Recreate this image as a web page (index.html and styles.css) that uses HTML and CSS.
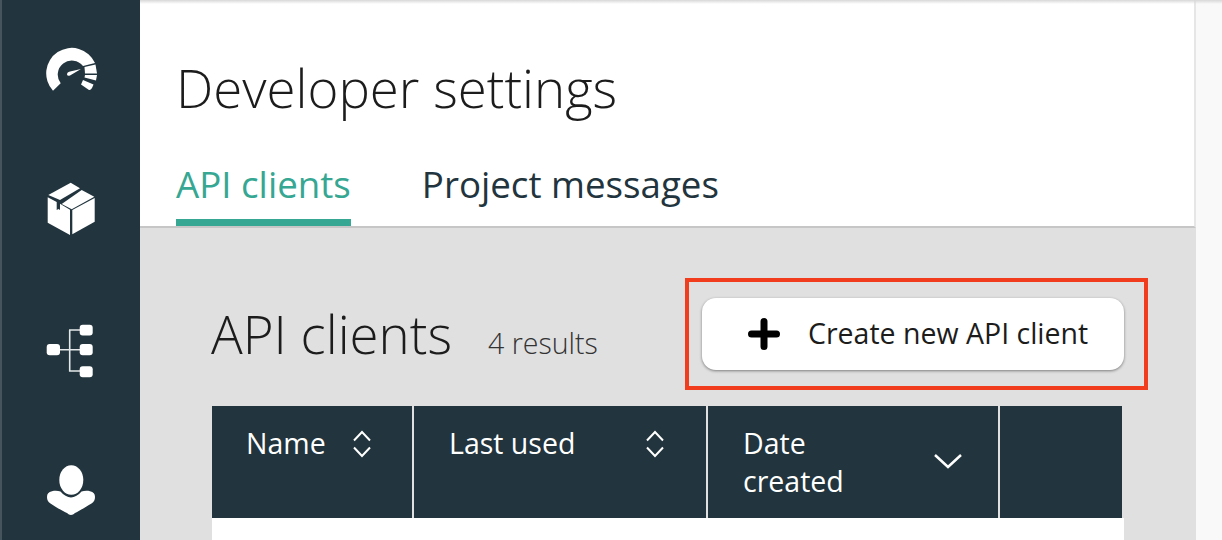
FILE: index.html
```html
<!DOCTYPE html>
<html lang="en">
<head>
<meta charset="utf-8">
<title>Developer settings</title>
<link rel="stylesheet" href="styles.css">
</head>
<body>
<div class="app">
  <nav class="sidebar">
    <svg class="nav-icon" width="62" height="58" viewBox="0 0 62 58">
      <g fill="#fff">
        <path d="M13 48.700A25.500 25.500 0 1 1 55 21L43 24A14 14 0 1 0 20.700 41.300Z"/>
        <path d="M41 27L30 33.500Q27.500 34.500 27 32.500Q27 30 30 29.500Z"/>
        <path d="M44.500 25L55.500 22.500L57 31.500H45Z"/>
        <path d="M45 33H57L56 38.500L44.500 35.500Z"/>
        <path d="M43 38L53.500 42.500L52 46Q50.500 48.500 49 48L41 42.500Z"/>
      </g>
    </svg>
    <svg class="nav-icon" width="62" height="62" viewBox="0 0 62 62">
      <g fill="#fff">
        <path d="M30.700 4.700L40 10.300L20 22L8.300 17Z"/>
        <path d="M41.700 12L54.300 18.700L31.700 31.300L21.700 26Z"/>
        <path d="M7.700 19.300L16.700 24V32L18.500 31L20 32V25.700L30 31.700V57L7.700 44.700Z"/>
        <path d="M32.300 32L54.700 20V43.700L32.300 56.300Z"/>
      </g>
    </svg>
    <svg class="nav-icon" width="62" height="62" viewBox="0 0 62 62">
      <path d="M20 31.700H40M29.700 12V53.500M29 12H40M29 53H40" fill="none" stroke="#e4e8ea" stroke-width="1.600"/>
      <g fill="#fff">
        <rect x="6.700" y="26" width="13.300" height="11.300" rx="3"/>
        <rect x="39.700" y="6.700" width="13" height="10.800" rx="3"/>
        <rect x="39.700" y="26" width="13" height="11.300" rx="3"/>
        <rect x="39.700" y="48.300" width="13" height="11" rx="3"/>
      </g>
    </svg>
    <svg class="nav-icon" width="62" height="62" viewBox="0 0 62 62">
      <g fill="#fff">
        <ellipse cx="31.300" cy="22" rx="12" ry="14.700"/>
        <path d="M12 33.300C15 32.500 18 32.800 20.500 33.500C23.500 37 27.500 39.500 31 39.500C34.500 39.500 38.500 37 41.500 33.500C44 32.800 47.500 32.500 50 33.300C53.500 33.800 55 36 55 39C55 42 54 44 51.500 45.500C46 49 38 53.500 35 55C32.500 57.500 29.500 57.500 27 55C24 53.500 15 49 10.500 45.500C8 44 7 42 7 39C7 36 8.500 33.800 12 33.300Z"/>
      </g>
    </svg>
  </nav>
  <main class="main">
    <header class="page-head">
      <h1 class="page-title">Developer settings</h1>
      <div class="tabs">
        <a class="tab tab-active">API clients</a>
        <a class="tab">Project messages</a>
      </div>
    </header>
    <section class="content">
      <div class="toolbar">
        <h2 class="section-title">API clients</h2>
        <span class="results">4 results</span>
        <div class="highlight">
          <button class="create-btn">
            <svg class="plus" width="32" height="32" viewBox="0 0 32 32"><path d="M16 3.500V28.500M3.500 16H28.500" stroke="#000" stroke-width="7" stroke-linecap="round"/></svg>
            <span class="btn-label">Create new API client</span>
          </button>
        </div>
      </div>
      <div class="table">
        <div class="thead">
          <div class="th th-name"><span>Name</span>
            <svg class="sort" width="20" height="28" viewBox="0 0 20 28"><path d="M2 10.500L10 2l8 8.500M2 17.500L10 26l8-8.500" fill="none" stroke="#fff" stroke-width="2"/></svg>
          </div>
          <div class="th th-used"><span>Last used</span>
            <svg class="sort" width="20" height="28" viewBox="0 0 20 28"><path d="M2 10.500L10 2l8 8.500M2 17.500L10 26l8-8.500" fill="none" stroke="#fff" stroke-width="2"/></svg>
          </div>
          <div class="th th-date"><span class="th-wrap">Date<br>created</span>
            <svg class="chev" width="28" height="18" viewBox="0 0 28 18"><path d="M1 3l13 12L27 3" fill="none" stroke="#fff" stroke-width="2.500"/></svg>
          </div>
          <div class="th th-last"></div>
        </div>
        <div class="tbody"></div>
      </div>
    </section>
  </main>
  <div class="gutter"></div>
</div>
</body>
</html>
```

FILE: styles.css
```css
* { box-sizing: border-box; }
html, body { margin: 0; height: 100%; overflow: hidden; }
body { font-family: "Open Sans", sans-serif; background: #f9f9f9; color: #1c1c1c; }
.app { display: flex; height: 540px; width: 1222px; position: relative; }
.app::after { content: ""; position: absolute; left: 140px; right: 0; top: 0; height: 4px; background: linear-gradient(#d8d8d8, rgba(255,255,255,0)); }
.sidebar { width: 140px; flex: none; background: #22343d; border-left: 2px solid #46555d; display: flex; flex-direction: column; align-items: center; padding: 42px 0 0; gap: 78px; }
.nav-icon { display: block; flex: none; }
.main { width: 1056px; flex: none; display: flex; flex-direction: column; }
.page-head { flex: none; background: #fff; height: 228px; padding: 56px 0 0 36px; border-bottom: 2px solid #c6c6c6; border-right: 2px solid #e6e6e6; }
.page-title { margin: 0; font-weight: 300; font-size: 52.8px; line-height: 64px; color: #1c1c1c; }
.tabs { display: flex; gap: 71px; margin-top: 34px; }
.tab { font-size: 36.7px; line-height: 49px; height: 72px; padding-top: 6px; color: #22343d; }
.tab-active { color: #35a792; border-bottom: 7px solid #35a792; }
.content { flex: 1; background: #e0e0e0; padding: 50px 72px 0 72px; }
.toolbar { display: flex; align-items: center; height: 112px; }
.section-title { margin: 0 0 0 -1px; font-weight: 300; font-size: 52.8px; line-height: 64px; color: #1c1c1c; }
.results { font-size: 28.5px; font-weight: 300; margin-left: 36px; margin-top: 18px; color: #333; }
.highlight { margin-left: auto; margin-right: -24px; border: 4px solid #f23c1e; padding: 16px 20px 16px 13px; }
.create-btn { display: flex; align-items: center; width: 422px; height: 72px; padding: 0 0 0 46px; gap: 28px; background: #fff; border: 0; border-radius: 14px; box-shadow: 0 1px 3px rgba(0,0,0,.45); font-family: inherit; font-size: 28.5px; color: #1c1c1c; }
.btn-label { margin-top: -2px; }
.plus { flex: none; }
.table { margin-top: 16px; width: 912px; background: #fff; }
.thead { display: flex; gap: 2px; height: 112px; background: #e0e0e0; }
.th { background: #22343d; color: #fff; font-size: 28.5px; line-height: 38px; padding: 18px 0 0 35px; display: flex; }
.th-name { width: 200px; }
.th-used { width: 292px; }
.th-date { width: 290px; }
.th-last { width: 122px; padding: 0; }
.th-name span { margin-left: -1px; }
.th-name .sort { margin-left: 26px; margin-top: 6px; }
.th-used .sort { margin-left: 70px; margin-top: 6px; }
.th-date .chev { margin-left: 90px; margin-top: 28px; }
.tbody { height: 30px; background: #fff; }
.gutter { flex: 1; }
```
